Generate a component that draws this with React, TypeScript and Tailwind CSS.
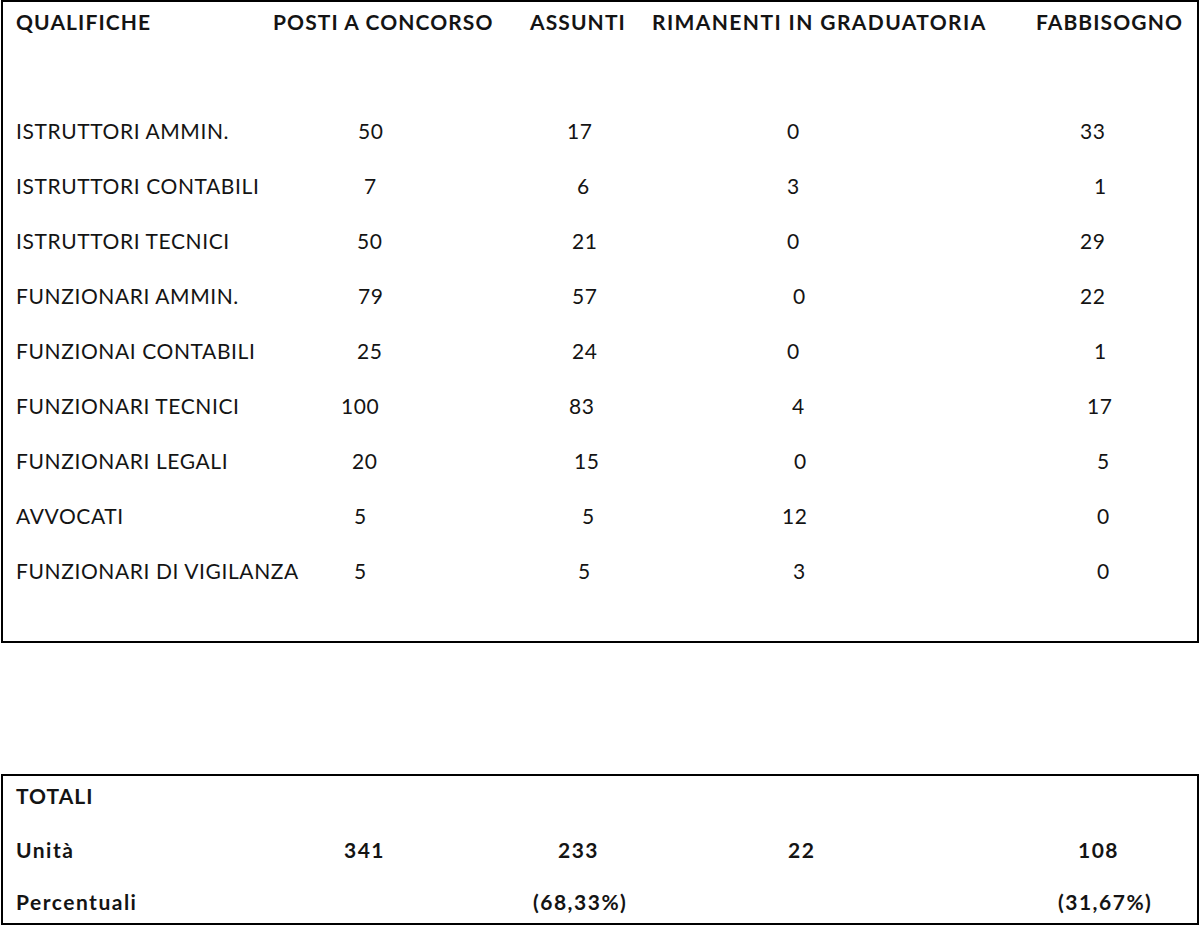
import React from 'react';

type Cell = [string, string];

const rows: { label: string; cells: Cell[] }[] = [
  { label: 'ISTRUTTORI AMMIN.', cells: [['50', 'pl-[28px]'], ['17', 'pl-[37px]'], ['0', 'pl-[37px]'], ['33', 'pl-[80px]']] },
  { label: 'ISTRUTTORI CONTABILI', cells: [['7', 'pl-[34px]'], ['6', 'pl-[47px]'], ['3', 'pl-[37px]'], ['1', 'pl-[94px]']] },
  { label: 'ISTRUTTORI TECNICI', cells: [['50', 'pl-[27px]'], ['21', 'pl-[42px]'], ['0', 'pl-[37px]'], ['29', 'pl-[80px]']] },
  { label: 'FUNZIONARI AMMIN.', cells: [['79', 'pl-[28px]'], ['57', 'pl-[42px]'], ['0', 'pl-[43px]'], ['22', 'pl-[80px]']] },
  { label: 'FUNZIONAI CONTABILI', cells: [['25', 'pl-[27px]'], ['24', 'pl-[42px]'], ['0', 'pl-[37px]'], ['1', 'pl-[94px]']] },
  { label: 'FUNZIONARI TECNICI', cells: [['100', 'pl-[11px]'], ['83', 'pl-[39px]'], ['4', 'pl-[42px]'], ['17', 'pl-[87px]']] },
  { label: 'FUNZIONARI LEGALI', cells: [['20', 'pl-[22px]'], ['15', 'pl-[44px]'], ['0', 'pl-[44px]'], ['5', 'pl-[97px]']] },
  { label: 'AVVOCATI', cells: [['5', 'pl-[24px]'], ['5', 'pl-[52px]'], ['12', 'pl-[32px]'], ['0', 'pl-[97px]']] },
  { label: 'FUNZIONARI DI VIGILANZA', cells: [['5', 'pl-[24px]'], ['5', 'pl-[48px]'], ['3', 'pl-[43px]'], ['0', 'pl-[97px]']] },
];

// column widths after the label: 330 -> 530 -> 750 -> 1000 -> end
const colWidths = ['w-[200px]', 'w-[220px]', 'w-[250px]', 'flex-1'];

function DataRow({ label, cells }: { label: string; cells: Cell[] }) {
  return (
    <div className="flex h-[55px] items-center pl-[13px] tracking-[0.6px]">
      <div className="w-[314px] whitespace-nowrap">{label}</div>
      {cells.map(([value, offset], i) => (
        <div key={i} className={`${colWidths[i]} ${offset}`}>
          {value}
        </div>
      ))}
    </div>
  );
}

export default function App() {
  return (
    <div className="w-[1200px] h-[927px] bg-white pl-[1px] text-[21px] leading-[24px] text-[#141414] font-['Lato','Open_Sans',sans-serif]">
      {/* Qualifiche */}
      <div className="w-[1198px] h-[643px] border-2 border-black">
        <div className="flex h-[40px] items-center pl-[13px] font-bold tracking-[1.1px] whitespace-nowrap">
          <div className="w-[257px]">QUALIFICHE</div>
          <div className="w-[257px]">POSTI A CONCORSO</div>
          <div className="w-[122px]">ASSUNTI</div>
          <div className="w-[384px] tracking-[1.4px]">RIMANENTI IN GRADUATORIA</div>
          <div>FABBISOGNO</div>
        </div>

        <div className="mt-[61px]">
          {rows.map((r) => (
            <DataRow key={r.label} label={r.label} cells={r.cells} />
          ))}
        </div>
      </div>

      {/* Totali */}
      <div className="mt-[131px] w-[1198px] h-[151px] border-2 border-black pt-[8px] pl-[13px] font-bold tracking-[1.5px]">
        <div className="h-[24px] tracking-[1px]">TOTALI</div>
        <div className="mt-[30px] flex h-[24px]">
          <div className="w-[314px]">Unità</div>
          <div className="w-[200px] pl-[14px]">341</div>
          <div className="w-[220px] pl-[28px]">233</div>
          <div className="w-[250px] pl-[38px]">22</div>
          <div className="flex-1 pl-[78px]">108</div>
        </div>
        <div className="mt-[28px] flex h-[24px]">
          <div className="w-[314px]">Percentuali</div>
          <div className="w-[200px]" />
          <div className="w-[220px] pl-[3px]">(68,33%)</div>
          <div className="w-[250px]" />
          <div className="flex-1 pl-[58px]">(31,67%)</div>
        </div>
      </div>
    </div>
  );
}
